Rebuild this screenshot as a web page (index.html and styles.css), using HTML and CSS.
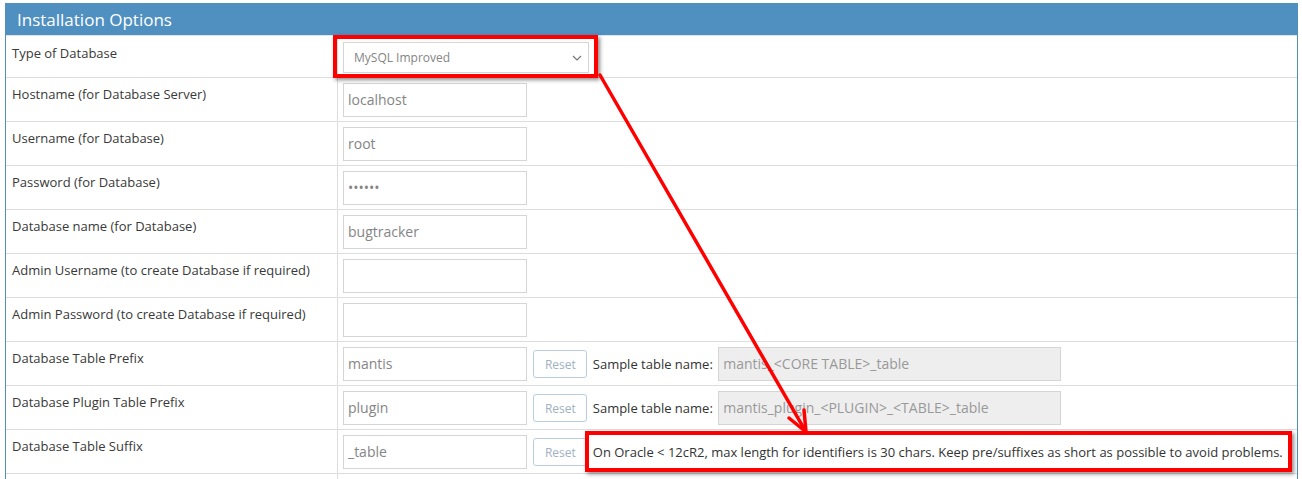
FILE: index.html
```html
<!DOCTYPE html>
<html lang="en">
<head>
    <meta charset="UTF-8">
    <title>Installation Options</title>
    <link rel="stylesheet" href="styles.css">
</head>
<body>
    <div class="widget">
        <div class="widget-header">
            <h4 class="widget-title">Installation Options</h4>
        </div>
        <table class="form-table">
            <tr class="row-select">
                <td class="label">Type of Database</td>
                <td>
                    <span class="select-wrap">
                        <select class="db-type">
                            <option>MySQL Improved</option>
                            <option>Microsoft SQL Server</option>
                            <option>PostgreSQL</option>
                            <option>Oracle</option>
                        </select>
                        <svg class="chevron" width="10" height="6" viewBox="0 0 10 6">
                            <polyline points="1,1 5,5 9,1" />
                        </svg>
                    </span>
                </td>
            </tr>
            <tr>
                <td class="label">Hostname (for Database Server)</td>
                <td><input class="field" type="text" value="localhost"></td>
            </tr>
            <tr>
                <td class="label">Username (for Database)</td>
                <td><input class="field" type="text" value="root"></td>
            </tr>
            <tr>
                <td class="label">Password (for Database)</td>
                <td><input class="field" type="password" value="secret"></td>
            </tr>
            <tr>
                <td class="label">Database name (for Database)</td>
                <td><input class="field" type="text" value="bugtracker"></td>
            </tr>
            <tr>
                <td class="label">Admin Username (to create Database if required)</td>
                <td><input class="field" type="text" value=""></td>
            </tr>
            <tr>
                <td class="label">Admin Password (to create Database if required)</td>
                <td><input class="field" type="password" value=""></td>
            </tr>
            <tr>
                <td class="label">Database Table Prefix</td>
                <td>
                    <input class="field" type="text" value="mantis">
                    <button class="btn-reset">Reset</button>
                    <span class="sample-label">Sample table name:</span>
                    <input class="field sample" type="text" value="mantis_<CORE TABLE>_table" readonly>
                </td>
            </tr>
            <tr>
                <td class="label">Database Plugin Table Prefix</td>
                <td>
                    <input class="field" type="text" value="plugin">
                    <button class="btn-reset">Reset</button>
                    <span class="sample-label">Sample table name:</span>
                    <input class="field sample" type="text" value="mantis_plugin_<PLUGIN>_<TABLE>_table" readonly>
                </td>
            </tr>
            <tr>
                <td class="label">Database Table Suffix</td>
                <td>
                    <input class="field" type="text" value="_table">
                    <button class="btn-reset">Reset</button>
                    <span class="sample-label">On Oracle &lt; 12cR2, max length for identifiers is 30 chars. Keep pre/suffixes as short as possible to avoid problems.</span>
                </td>
            </tr>
            <tr class="row-next">
                <td class="label"></td>
                <td></td>
            </tr>
        </table>
    </div>

    <!-- annotations drawn over the screenshot -->
    <div class="callout callout-select"></div>
    <div class="callout callout-note"></div>
    <svg class="arrow" width="1302" height="479" viewBox="0 0 1302 479">
        <line x1="600" y1="75" x2="806" y2="432" />
        <polyline points="789,418 806,432 804,410" />
    </svg>
</body>
</html>
```

FILE: styles.css
```css
body {
    margin: 3px 0 0 5px;
    font-family: "Open Sans", "Liberation Sans", Arial, sans-serif;
    font-size: 13px;
    color: #393939;
    background-color: #fff;
    height: 476px;
    overflow: hidden;
}
.widget {
    width: 1293px;
    border: 1px solid #4f90c1;
    border-top: none;
    box-sizing: border-box;
}
.widget-header {
    height: 33px;
    background-color: #4f90c1;
    border-bottom: 1px solid #dde6ee;
    box-sizing: border-box;
    padding-left: 11px;
}
.widget-title {
    margin: 0;
    font-size: 17px;
    font-weight: normal;
    line-height: 33px;
    color: #fff;
}
.form-table {
    width: 100%;
    border-collapse: collapse;
}
.form-table td {
    border-bottom: 1px solid #ddd;
    padding: 5px 5px 4px 5px;
    vertical-align: top;
    white-space: nowrap;
}
.form-table td.label {
    width: 319px;
    padding: 7px 6px 0 6px;
    line-height: 18px;
    border-right: 1px solid #ddd;
}
.row-select td {
    padding-top: 6px;
    padding-bottom: 4px;
}
.row-select td.label {
    padding-top: 8px;
}
.row-next td {
    height: 34px;
}
.select-wrap {
    position: relative;
    display: inline-block;
}
.db-type {
    display: block;
    width: 246px;
    height: 31px;
    border: 1px solid #d5d5d5;
    border-radius: 0;
    background-color: #fff;
    color: #858585;
    font-family: "Open Sans", "Liberation Sans", Arial, sans-serif;
    font-size: 12px;
    padding: 0 10px;
    margin: 0;
    appearance: none;
    -webkit-appearance: none;
    outline: none;
}
.chevron {
    position: absolute;
    right: 7px;
    top: 13px;
    pointer-events: none;
}
.chevron polyline {
    stroke: #777;
    stroke-width: 1.2;
    fill: none;
}
.field {
    width: 184px;
    height: 34px;
    box-sizing: border-box;
    border: 1px solid #d5d5d5;
    border-radius: 0;
    padding: 4px 4px 6px;
    margin: 0;
    font-family: "Open Sans", "Liberation Sans", Arial, sans-serif;
    font-size: 14px;
    color: #858585;
    background-color: #fff;
    vertical-align: middle;
    outline: none;
}
.field.sample {
    width: 343px;
    background-color: #eee;
    color: #999;
    margin-left: 2px;
}
.btn-reset {
    width: 54px;
    height: 28px;
    margin: 0 0 0 3px;
    padding: 0;
    background-color: #fff;
    border: 1px solid #bacddd;
    border-radius: 3px;
    color: #9fb1c2;
    font-family: "Open Sans", "Liberation Sans", Arial, sans-serif;
    font-size: 12px;
    vertical-align: middle;
}
.sample-label {
    margin-left: 2px;
    color: #333;
    vertical-align: middle;
}
.callout {
    position: absolute;
    border: 4px solid #f00;
    box-shadow: 2px 2px 4px rgba(0, 0, 0, 0.45);
    box-sizing: border-box;
}
.callout-select {
    left: 333px;
    top: 35px;
    width: 265px;
    height: 43px;
}
.callout-note {
    left: 585px;
    top: 431px;
    width: 707px;
    height: 41px;
}
.arrow {
    position: absolute;
    left: 0;
    top: 0;
    pointer-events: none;
}
.arrow line,
.arrow polyline {
    stroke: #f00;
    stroke-width: 3.5;
    fill: none;
    stroke-linecap: round;
    stroke-linejoin: round;
}
```
